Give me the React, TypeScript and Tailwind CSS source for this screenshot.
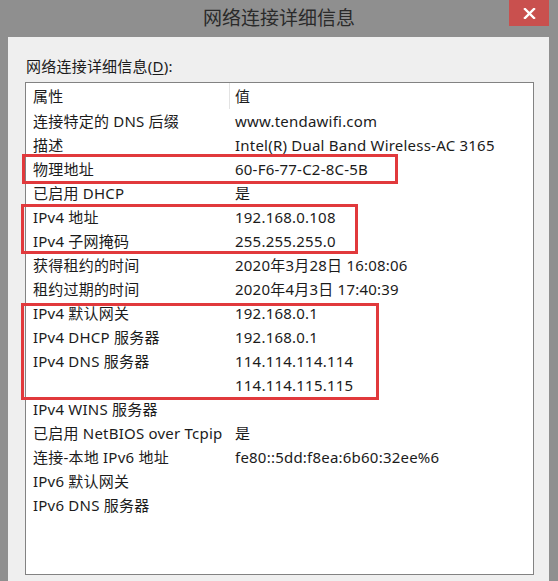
import type { ReactNode } from "react";

// 网络连接详细信息 dialog (Windows 8 style) with red annotation boxes
const ROWS: [string, string][] = [
  ["连接特定的 DNS 后缀", "www.tendawifi.com"],
  ["描述", "Intel(R) Dual Band Wireless-AC 3165"],
  ["物理地址", "60-F6-77-C2-8C-5B"],
  ["已启用 DHCP", "是"],
  ["IPv4 地址", "192.168.0.108"],
  ["IPv4 子网掩码", "255.255.255.0"],
  ["获得租约的时间", "2020年3月28日 16:08:06"],
  ["租约过期的时间", "2020年4月3日 17:40:39"],
  ["IPv4 默认网关", "192.168.0.1"],
  ["IPv4 DHCP 服务器", "192.168.0.1"],
  ["IPv4 DNS 服务器", "114.114.114.114"],
  ["", "114.114.115.115"],
  ["IPv4 WINS 服务器", ""],
  ["已启用 NetBIOS over Tcpip", "是"],
  ["连接-本地 IPv6 地址", "fe80::5dd:f8ea:6b60:32ee%6"],
  ["IPv6 默认网关", ""],
  ["IPv6 DNS 服务器", ""],
];

function Row({ prop, value }: { prop: ReactNode; value: ReactNode }) {
  return (
    <div className="flex h-[24px] items-center whitespace-nowrap">
      <div className="w-[203px] shrink-0 pl-[7px]">{prop}</div>
      <div className="pl-[6px]">{value}</div>
    </div>
  );
}

export default function App() {
  return (
    <div
      className="flex h-[581px] w-[558px] flex-col overflow-hidden bg-[#8f8f8f] text-[15px] tracking-[0.22px] text-[#1b1b1b]"
      style={{ fontFamily: '"Noto Sans", "Noto Sans CJK SC", sans-serif' }}
    >
      {/* title bar */}
      <div className="relative flex h-[37px] shrink-0 items-center justify-center">
        <span className="text-[19px] leading-none tracking-normal text-[#2a2a2a] -mt-[1px]">网络连接详细信息</span>
        <div className="absolute right-[9px] top-0 flex h-[26px] w-[40px] items-center justify-center bg-[#c9504e]">
          <svg width="13" height="11" viewBox="0 0 13 11">
            <path d="M2 1 L11 10 M11 1 L2 10" stroke="#fff" strokeWidth="2.4" strokeLinecap="square" />
          </svg>
        </div>
      </div>

      {/* body */}
      <div className="ml-[8px] mr-[9px] flex flex-1 flex-col bg-[#efefef] pl-[17px] pr-[15px]">
        <div className="mt-[19px] h-[26px] pl-[1px] leading-[20px]">
          网络连接详细信息(<span className="underline underline-offset-2">D</span>):
        </div>
        <div className="relative h-[493px] border border-[#828282] bg-white">
          <div className="relative flex h-[26px] items-center">
            <div className="w-[203px] shrink-0 pl-[7px]">属性</div>
            <div className="h-full w-px bg-[#e3e3e3]" />
            <div className="pl-[5px]">值</div>
          </div>
          {ROWS.map(([p, v], i) => (
            <Row key={i} prop={p} value={v} />
          ))}

          {/* red annotation boxes */}
          <div className="absolute left-[-4px] top-[71px] h-[30px] w-[376px] border-[3px] border-[#e1393c]" />
          <div className="absolute left-[-5px] top-[121px] h-[50px] w-[337px] border-[3px] border-[#e1393c]" />
          <div className="absolute left-[-5px] top-[220px] h-[97px] w-[358px] border-[3px] border-[#e1393c]" />
        </div>
      </div>
    </div>
  );
}
